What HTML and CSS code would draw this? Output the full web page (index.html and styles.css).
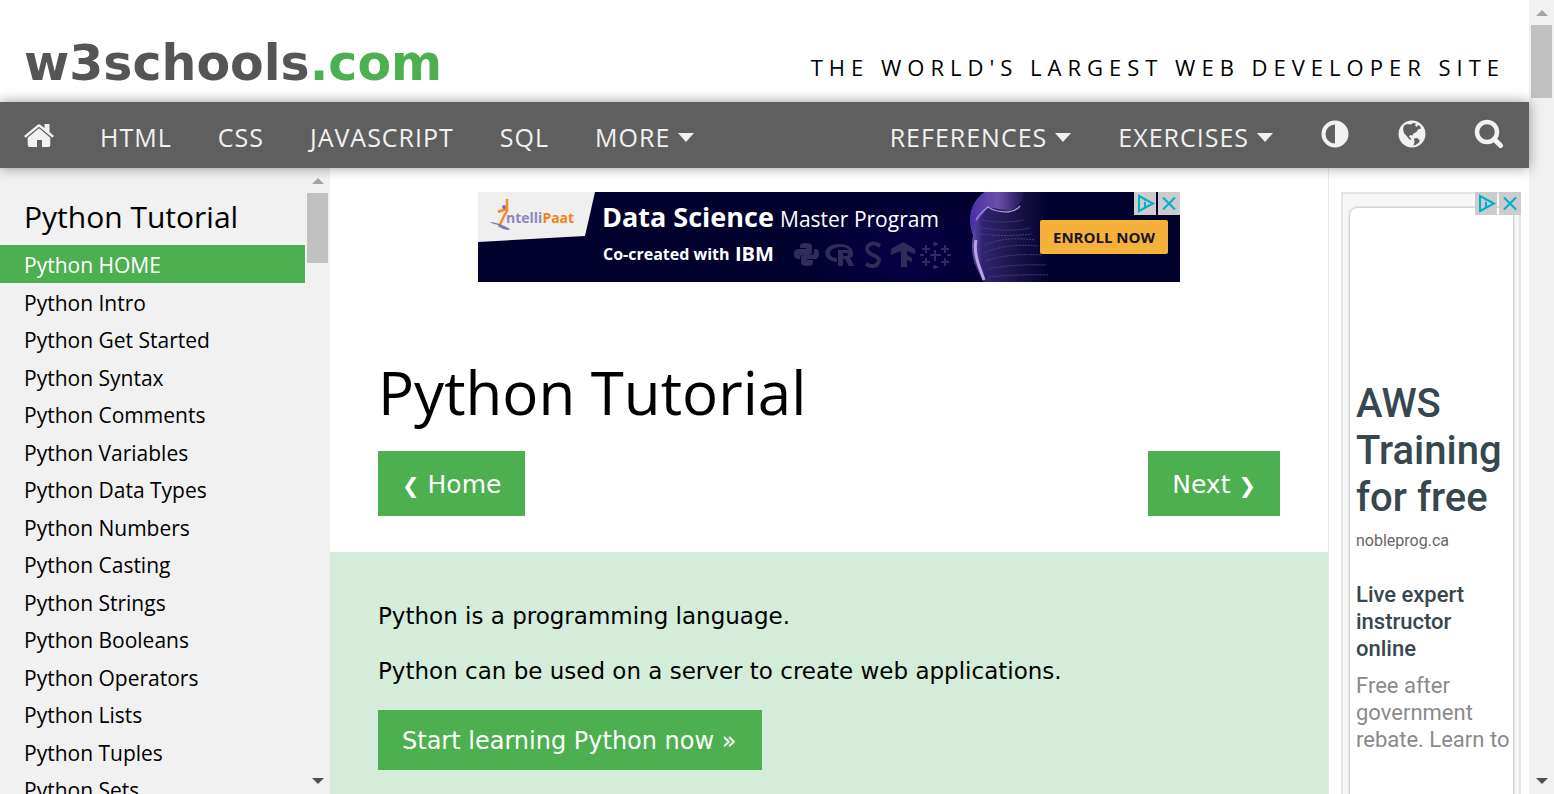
FILE: index.html
```html
<!DOCTYPE html>
<html lang="en">
<head>
<meta charset="utf-8">
<title>Python Tutorial</title>
<link rel="stylesheet" href="styles.css">
</head>
<body>
<div class="page">
  <header class="masthead">
    <a class="logo" href="#">w3schools<span class="logo-tld">.com</span></a>
    <span class="tagline">THE WORLD'S LARGEST WEB DEVELOPER SITE</span>
  </header>
  <nav class="topnav" aria-label="Main">
    <div class="nav-group">
      <a class="nav-home" href="#" aria-label="Home"><svg width="30" height="24" viewBox="0 0 30 24"><path fill="currentColor" d="M20.500 0h5v8l4.500 3.900-1.600 1.800L15 2.800 1.600 13.700 0 11.900 13.300.9Q15-.4 16.700.9l3.800 3.200z"/><path fill="currentColor" d="M15 4.200l11.300 9.500V21q0 2-2 2H18v-7h-5v7H5.700q-2 0-2-2v-7.300z"/></svg></a>
      <a href="#">HTML</a>
      <a href="#">CSS</a>
      <a href="#">JAVASCRIPT</a>
      <a href="#">SQL</a>
      <button type="button">MORE<span class="caret"></span></button>
    </div>
    <div class="nav-group nav-right">
      <button type="button">REFERENCES<span class="caret"></span></button>
      <button type="button">EXERCISES<span class="caret"></span></button>
      <button class="nav-icon" type="button" aria-label="Dark mode"><svg width="28" height="28" viewBox="0 0 28 28"><circle cx="14" cy="14" r="11.500" fill="none" stroke="currentColor" stroke-width="4"/><path fill="currentColor" d="M14 2a12 12 0 0 1 0 24z"/></svg></button>
      <button class="nav-icon" type="button" aria-label="Translate"><svg width="28" height="28" viewBox="0 0 28 28"><circle cx="14" cy="14" r="13.500" fill="currentColor"/><path class="land" d="M6 5.500l3-1.500 4 .5 2-1.500 3 .5-1 2 2 1.500 1-2 2 1 1 2.500-3 1-1.500 2.500-3 1.500-1 2-2-.5-1.500 1.500 1.500 1.500 1 2-2-.5-3-3.500-2.500-3L5 9zM16 18.500l3-.5 2.500 2-.5 2.500-3.500 2.500-2 .5 1-3.500z"/></svg></button>
      <button class="nav-icon" type="button" aria-label="Search"><svg width="30" height="30" viewBox="0 0 30 30"><circle cx="13" cy="13" r="10" fill="none" stroke="currentColor" stroke-width="4.500"/><path d="M20.500 20.500l6 6" stroke="currentColor" stroke-width="5" stroke-linecap="round"/></svg></button>
    </div>
  </nav>
  <div class="columns">
    <div class="sidebar">
      <nav class="menu" aria-label="Tutorial">
        <h2>Python Tutorial</h2>
        <ul>
          <li class="active"><a href="#">Python HOME</a></li>
          <li><a href="#">Python Intro</a></li>
          <li><a href="#">Python Get Started</a></li>
          <li><a href="#">Python Syntax</a></li>
          <li><a href="#">Python Comments</a></li>
          <li><a href="#">Python Variables</a></li>
          <li><a href="#">Python Data Types</a></li>
          <li><a href="#">Python Numbers</a></li>
          <li><a href="#">Python Casting</a></li>
          <li><a href="#">Python Strings</a></li>
          <li><a href="#">Python Booleans</a></li>
          <li><a href="#">Python Operators</a></li>
          <li><a href="#">Python Lists</a></li>
          <li><a href="#">Python Tuples</a></li>
          <li><a href="#">Python Sets</a></li>
        </ul>
      </nav>
      <div class="scrollbar"><span class="arrow up"></span><span class="thumb"></span><span class="arrow down"></span></div>
    </div>
    <main class="content">
      <div class="banner">
        <svg width="702" height="90" viewBox="0 0 702 90" role="img" aria-label="Data Science Master Program">
          <defs>
            <linearGradient id="face" x1="0" x2="1"><stop offset="0" stop-color="#6a4fb8"/><stop offset=".16" stop-color="#30236f"/><stop offset=".5" stop-color="#1f184e"/><stop offset="1" stop-color="#02012e"/></linearGradient>
            <linearGradient id="brow" x1="0" x2="1"><stop offset="0" stop-color="#4a2fa5"/><stop offset=".5" stop-color="#6b50ad"/><stop offset="1" stop-color="#1a1148"/></linearGradient>
            <radialGradient id="glow"><stop offset="0" stop-color="#080048"/><stop offset="1" stop-color="#02012e"/></radialGradient>
          </defs>
          <path fill="#02012e" d="M0 0h702v90H0z"/>
          <ellipse cx="430" cy="60" rx="110" ry="60" fill="url(#glow)"/>
          <path fill="#efeff0" d="M0 0h117l-10 44L0 50z"/>
          <path fill="url(#face)" d="M506 0q-10 8-13 20-2 14 2 23-2 12 0 22 3 13 11 25h64V0z"/>
          <path fill="url(#brow)" d="M507 0h40q-2 12-15 19-12-2-22-4l-11 15-4 11q-4-10-2-22 4-13 14-19z"/>
          <path fill="none" stroke="#a58fd4" stroke-width="1.500" d="M498 28q5-8 12-13 7 5 20 5 8-1 12-6"/>
          <path fill="none" stroke="#b9a5e0" stroke-width="3" d="M498 48q-2 10 2 23l6 17"/>
          <g fill="none" stroke="#4b4083" stroke-dasharray="2 1">
            <path d="M504 28q20 4 42 0M502 35q24 6 50 1M502 42q26 3 52 0M507 53q20-9 50-5M506 61q22-10 54-7M508 69q22-8 56-6M510 77q22-5 58-4M511 85q28-3 60-2"/>
          </g>
          <path fill="none" stroke="#f58a2b" stroke-width="2.500" d="M29 7v12l-4 7-4 9M20 20l8-3"/>
          <circle cx="26" cy="15" r="2" fill="#7b74b5"/>
          <path fill="#7b74b5" d="M11 30q9 0 21 7l-2 1q-8-1-10-5-5-1-9-3z"/>
          <text class="brand" x="28" y="31" fill="#8d86c0">ntelli<tspan fill="#f58220">Paat</tspan></text>
          <text class="ad-title" x="124" y="35">Data Science</text>
          <text class="ad-sub" x="302" y="35">Master Program</text>
          <text class="ad-co" x="125" y="68">Co-created with</text>
          <text class="ad-ibm" x="257" y="69">IBM</text>
          <g fill="#2f2d57">
            <path d="M322 54q0-3 6-3t6 3v6q0 3-4 3h-5q-3 0-3 4h-2q-4 0-4-5t4-5h8v-1h-6zM336 57h2q3 0 3 5t-4 5h-8v1h6v3q0 3-6 3t-6-3v-5q0-3 4-3h5q4 0 4-3z"/>
            <path fill-rule="evenodd" d="M361 52c9 0 14 4 14 9l-3-1c-1-3-4-5-9-5-14 0-14 11-4 11v4c-16-1-16-18 2-18z"/>
            <path fill-rule="evenodd" d="M360 58h10q5 0 5 4 0 3-3 4l4 8h-5l-4-7h-2v7h-5zm5 3v3h3q2 0 2-1.500t-2-1.500z"/>
          </g>
          <path fill="none" stroke="#2f2d57" stroke-width="4" d="M402 54c-10-7-18 3-9 8 9 4 9 6 7 9-2 4-7 4-12 1"/>
          <path fill="#2f2d57" d="M425 50l12 7v5l-8-3v4l5 3v4l-5-2v7h-6V59l-10 4v-6z"/>
          <path fill="none" stroke="#2f2d57" stroke-width="2" d="M457 58v11M452 63h11M448 53v8M444 57h8M467 53v8M463 57h8M448 66v8M444 70h8M467 66v8M463 70h8M457 50v4M455 52h5M457 73v4M455 75h5M442 63h4M469 63h4"/>
          <rect x="562" y="28" width="128" height="34" rx="2" fill="#f6b13b"/>
          <text class="ad-cta" x="575" y="51">ENROLL NOW</text>
        </svg>
        <div class="ad-tools">
          <button type="button" aria-label="Ad info"><svg width="22" height="23" viewBox="0 0 22 23"><path class="ad-mark" d="M5 4v15l14-7.500zM11 10v5"/><path class="ad-mark" d="M11 7v1.500"/></svg></button>
          <button type="button" aria-label="Close ad"><svg width="22" height="23" viewBox="0 0 22 23"><path class="ad-mark" d="M5 5.500l12 12M17 5.500l-12 12"/></svg></button>
        </div>
      </div>
      <h1>Python Tutorial</h1>
      <div class="pager">
        <a class="btn" href="#"><span class="chevron">❮</span> Home</a>
        <a class="btn" href="#">Next <span class="chevron">❯</span></a>
      </div>
      <section class="intro">
        <p>Python is a programming language.</p>
        <p>Python can be used on a server to create web applications.</p>
        <a class="btn start" href="#">Start learning Python now »</a>
      </section>
    </main>
    <aside class="rail">
      <div class="side-ad">
        <div class="side-card">
          <a class="side-title" href="#">AWS Training for free</a>
          <p class="side-domain">nobleprog.ca</p>
          <p class="side-lead">Live expert instructor online</p>
          <p class="side-text">Free after government rebate. Learn to</p>
        </div>
        <div class="ad-tools">
          <button type="button" aria-label="Ad info"><svg width="22" height="23" viewBox="0 0 22 23"><path class="ad-mark" d="M5 4v15l14-7.500zM11 10v5"/><path class="ad-mark" d="M11 7v1.500"/></svg></button>
          <button type="button" aria-label="Close ad"><svg width="22" height="23" viewBox="0 0 22 23"><path class="ad-mark" d="M5 5.500l12 12M17 5.500l-12 12"/></svg></button>
        </div>
      </div>
    </aside>
  </div>
</div>
<div class="scrollbar page-scroll"><span class="arrow up"></span><span class="thumb"></span><span class="arrow down"></span></div>
</body>
</html>
```
FILE: styles.css
```css
* { box-sizing: border-box; }
body {
  margin: 0;
  height: 100vh;
  display: flex;
  overflow: hidden;
  background: #fff;
  color: #000;
  font-family: "Open Sans", "Noto Sans", sans-serif;
}
a { color: inherit; text-decoration: none; }
h1, h2, p, ul { margin: 0; padding: 0; font-weight: 400; }
button { border: 0; padding: 0; background: none; color: inherit; font: inherit; letter-spacing: inherit; }
svg { display: block; }

.page { flex: 1; min-width: 0; display: flex; flex-direction: column; }

.masthead {
  display: flex;
  justify-content: space-between;
  align-items: flex-end;
  height: 102px;
  padding: 0 24px 13px;
}
.logo {
  font: 700 49px/50px "DejaVu Sans", sans-serif;
  color: #555;
}
.logo-tld { color: #4caf50; }
.tagline { font-size: 22px; line-height: 44px; letter-spacing: 6px; }

.topnav {
  position: relative;
  z-index: 1;
  display: flex;
  justify-content: space-between;
  height: 66px;
  padding: 0 25px 0 24px;
  background: #5f5f5f;
  color: #f1f1f1;
  box-shadow: 0 0 12px rgba(0, 0, 0, .4);
  font-size: 25px;
  letter-spacing: 1px;
}
.nav-group { display: flex; align-items: center; gap: 46px; padding-top: 4px; }
.nav-group button { display: flex; align-items: center; }
.nav-home { padding-bottom: 3px; }
.nav-icon { width: 30px; justify-content: center; }
.nav-group .nav-icon { padding-bottom: 7px; }
.nav-right { gap: 47px; }
.land { fill: #5f5f5f; }
.caret {
  margin-left: 8px;
  border: 8px solid transparent;
  border-top: 9px solid #f1f1f1;
  border-bottom: 0;
}

.columns { flex: 1; min-height: 0; display: flex; }

.sidebar { display: flex; width: 330px; background: #f1f1f1; overflow: hidden; }
.menu { flex: 1; padding-top: 28px; }
.menu h2 { padding-left: 24px; font-size: 30px; line-height: 42px; margin-bottom: 7px; }
.menu ul { list-style: none; font-size: 21px; }
.menu a { display: block; padding: 3px 0 0 24px; line-height: 34px; }
.menu li:nth-child(odd) a { line-height: 35px; }
.menu .active { background: #4caf50; color: #fff; }

.scrollbar {
  display: flex;
  flex-direction: column;
  align-items: center;
  width: 25px;
  background: #f1f1f1;
}
.arrow { border: 6px solid transparent; }
.up { border-top: 0; border-bottom-color: #a3a3a3; margin: 10px 0 9px; }
.down { border-bottom: 0; border-top-color: #505050; margin: auto 0 10px; }
.thumb { width: 21px; height: 70px; background: #c1c1c1; }
.page-scroll .thumb { height: 73px; }

.content { flex: 1; min-width: 0; display: flex; flex-direction: column; padding-top: 24px; border-right: 1px solid #e9e9e9; }
.banner { position: relative; align-self: center; width: 702px; }
.brand { font: 700 14px "Open Sans", sans-serif; }
.ad-title { font: 700 27px "Open Sans", sans-serif; fill: #fff; }
.ad-sub { font: 400 21px "Open Sans", sans-serif; fill: #fff; }
.ad-co { font: 700 16px "Open Sans", sans-serif; fill: #fff; }
.ad-ibm { font: 700 20px "Open Sans", sans-serif; fill: #fff; }
.ad-cta { font: 700 15px "Open Sans", sans-serif; fill: #17152c; }
.ad-tools { position: absolute; top: 0; right: 0; display: flex; gap: 2px; }
.ad-tools button { background: #ccc; }
.ad-mark { fill: none; stroke: #00aecd; stroke-width: 2; }

.content h1 { padding: 0 48px; margin-top: 65px; font-size: 60px; line-height: 90px; }
.pager { display: flex; justify-content: space-between; padding: 14px 48px 36px; }
.btn {
  display: inline-block;
  padding: 2px 24px 0;
  background: #4caf50;
  color: #fff;
  font: 25px/63px "DejaVu Sans", sans-serif;
}
.chevron { font-size: 21px; line-height: 21px; }
.intro { flex: 1; padding: 47px 48px; background: #d4edda; font: 23px/35px "DejaVu Sans", sans-serif; }
.intro p { margin-bottom: 20px; }
.intro .start { margin-top: 1px; padding: 2px 26px 0 24px; font-size: 24px; line-height: 58px; }

.rail { width: 200px; padding: 24px 8px 0 12px; overflow: hidden; }
.side-ad { position: relative; height: 900px; padding: 14px 6px 14px 7px; border: 2px solid #e5e5e7; background: #f7f7f8; font-family: Roboto, sans-serif; }
.side-card { height: 100%; padding: 172px 0 0 6px; border-radius: 7px; background: #fff; box-shadow: 0 0 3px rgba(0, 0, 0, .4); }
.side-ad .ad-tools { top: -2px; right: -2px; }
.side-title { display: block; color: #37474f; font-size: 40px; font-weight: 500; line-height: 47px; }
.side-domain { margin: 11px 0 31px; color: #666; font-size: 16px; line-height: 18px; }
.side-lead { margin-bottom: 10px; color: #37474f; font-size: 22px; font-weight: 500; line-height: 27px; }
.side-text { color: #8a8a8a; font-size: 22px; line-height: 27px; }
```
